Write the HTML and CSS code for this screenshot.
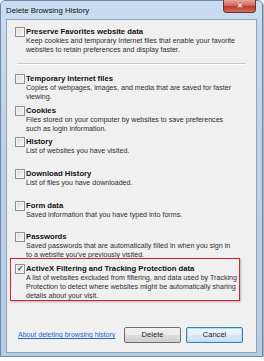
FILE: index.html
```html
<!DOCTYPE html>
<html lang="en">
<head>
  <meta charset="UTF-8" />
  <title>Delete Browsing History</title>
  <link rel="stylesheet" href="styles.css">
</head>
<body>
  <div class="window">
    <div class="titlebar">
      <span class="title">Delete Browsing History</span>
      <span class="close">&#x2715;</span>
    </div>

    <div class="client">
      <div class="item first">
        <span class="box"></span>
        <div class="text">
          <h4>Preserve Favorites website data</h4>
          <p>Keep cookies and temporary Internet files that enable your favorite<br>websites to retain preferences and display faster.</p>
        </div>
      </div>

      <hr class="sep" />

      <div class="item">
        <span class="box"></span>
        <div class="text">
          <h4>Temporary Internet files</h4>
          <p>Copies of webpages, images, and media that are saved for faster<br>viewing.</p>
        </div>
      </div>
      <div class="item">
        <span class="box"></span>
        <div class="text">
          <h4>Cookies</h4>
          <p>Files stored on your computer by websites to save preferences<br>such as login information.</p>
        </div>
      </div>
      <div class="item">
        <span class="box"></span>
        <div class="text">
          <h4>History</h4>
          <p>List of websites you have visited.</p>
        </div>
      </div>
      <div class="item">
        <span class="box"></span>
        <div class="text">
          <h4>Download History</h4>
          <p>List of files you have downloaded.</p>
        </div>
      </div>
      <div class="item">
        <span class="box"></span>
        <div class="text">
          <h4>Form data</h4>
          <p>Saved information that you have typed into forms.</p>
        </div>
      </div>
      <div class="item">
        <span class="box"></span>
        <div class="text">
          <h4>Passwords</h4>
          <p>Saved passwords that are automatically filled in when you sign in<br>to a website you've previously visited.</p>
        </div>
      </div>
      <div class="item marked">
        <span class="box checked">&#x2713;</span>
        <div class="text">
          <h4>ActiveX Filtering and Tracking Protection data</h4>
          <p>A list of websites excluded from filtering, and data used by Tracking<br>Protection to detect where websites might be automatically sharing<br>details about your visit.</p>
        </div>
      </div>

      <div class="footer">
        <a href="#" class="link">About deleting browsing history</a>
        <div class="buttons">
          <button class="btn">Delete</button>
          <button class="btn default">Cancel</button>
        </div>
      </div>
    </div>
  </div>
</body>
</html>
```

FILE: styles.css
```css
body {
  margin: 0;
  background: #fff;
  font-family: 'Liberation Sans', Arial, sans-serif;
  color: #1e1e1e;
}

/* Aero frame */
.window {
  width: 251px;
  height: 350px;
  padding: 0 5px 5px 5px;
  background: linear-gradient(180deg, #c9dcf0 0%, #bcd2ea 40%, #b6cde7 100%);
  border: 1px solid #6f87a6;
  border-radius: 5px 5px 0 0;
  box-shadow: 2px 2px 3px rgba(0, 0, 0, 0.35);
}

.titlebar {
  height: 18px;
  display: flex;
  align-items: flex-start;
  justify-content: space-between;
}

.title {
  font-size: 7.8px;
  line-height: 9px;
  margin-top: 5px;
  color: #111;
}

.close {
  width: 31px;
  height: 12px;
  margin-top: -1px;
  margin-right: 1px;
  background: linear-gradient(180deg, #e8a59a 0%, #d4665a 45%, #c0392b 55%, #d0705c 100%);
  border: 1px solid #6d3530;
  border-top: none;
  border-radius: 0 0 4px 4px;
  color: #fff;
  font-size: 7px;
  font-weight: 700;
  line-height: 12px;
  text-align: center;
  text-shadow: 0 0 1px #5a2a25;
}

.client {
  height: 326px;
  background: #f0f0f0;
  border: 1px solid #8ea4c1;
  padding: 6px 8px 0 7px;
}

.item {
  display: flex;
  gap: 1px;
  height: 31.7px;
  position: relative;
  padding-left: 1px;
}

.item.first {
  height: 29px;
}

.box {
  flex: none;
  width: 8px;
  height: 8px;
  margin-top: 1px;
  border: 1px solid #8f8f8f;
  background: linear-gradient(135deg, #dcdcdc, #fafafa);
  box-shadow: inset 0 0 0 1px #f4f4f4;
  font-size: 8px;
  line-height: 8px;
  text-align: center;
  color: #2b4a7a;
  font-weight: 700;
}

.text h4 {
  margin: 0;
  font-size: 7.7px;
  line-height: 11px;
  font-weight: 700;
  color: #111;
  white-space: nowrap;
}

.text p {
  margin: 0;
  font-size: 7.1px;
  line-height: 9px;
  color: #2e2e2e;
  white-space: nowrap;
}

.sep {
  margin: 8px 2px 8px 3px;
  border: none;
  border-top: 1px solid #c8c8c8;
  border-bottom: 1px solid #fff;
}

/* red annotation frame */
.item.marked::after {
  content: "";
  position: absolute;
  top: -5px;
  bottom: -6px;
  left: -4px;
  right: 8px;
  border: 1.5px solid #c9252b;
  box-shadow: 1px 1px 2px rgba(0, 0, 0, 0.25);
}

.footer {
  display: flex;
  align-items: center;
  justify-content: space-between;
  margin-top: 32px;
  padding-left: 4px;
  padding-right: 5px;
}

.link {
  font-size: 7px;
  color: #1a67c9;
  text-decoration: underline;
}

.buttons {
  display: flex;
  gap: 5px;
}

.btn {
  width: 57px;
  height: 16px;
  padding: 0;
  font-family: 'Liberation Sans', Arial, sans-serif;
  font-size: 7.6px;
  color: #222;
  border: 1px solid #707070;
  border-radius: 2px;
  background: linear-gradient(180deg, #f2f2f2 0%, #ebebeb 48%, #dddddd 52%, #cfcfcf 100%);
}

.btn.default {
  border-color: #3c7fb1;
  box-shadow: inset 0 0 0 1px #a6e0fa;
  background: linear-gradient(180deg, #f0f7fc 0%, #e5f0f8 48%, #d7e7f4 52%, #cde1f1 100%);
}
```
